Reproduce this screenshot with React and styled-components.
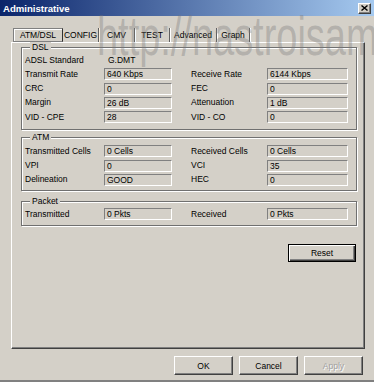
import { Fragment } from 'react';
import styled, { createGlobalStyle, css } from 'styled-components';

const GlobalStyle = createGlobalStyle`
  html, body {
    margin: 0;
    padding: 0;
    background: #d4d0c8;
  }
  body {
    font-family: "Liberation Sans", Arial, sans-serif;
    font-size: 8.5px;
    color: #000;
  }
`;

const Window = styled.div`
  position: relative;
  width: 374px;
  height: 382px;
  box-sizing: border-box;
  overflow: hidden;
  background: #d4d0c8;
  border-bottom: 2px solid #808080;
  display: flex;
  flex-direction: column;
`;

const TitleBar = styled.div`
  height: 16px;
  flex: none;
  display: flex;
  align-items: center;
  justify-content: space-between;
  padding: 0 3px;
  background: linear-gradient(to right, #0a246a, #a6caf0);
  color: #fff;
  font-weight: bold;
  font-size: 9.6px;
`;

const CloseButton = styled.div`
  width: 13px;
  height: 11px;
  box-sizing: border-box;
  background: #d4d0c8;
  border: 1px solid;
  border-color: #fff #404040 #404040 #fff;
  box-shadow: inset -1px -1px 0 #808080;
  display: flex;
  align-items: center;
  justify-content: center;
`;

const Content = styled.div`
  flex: 1;
  display: flex;
  flex-direction: column;
  padding: 12px 9px 0 11px;
`;

const TabStrip = styled.div`
  display: flex;
  height: 14px;
  margin-left: 2px;
`;

const Tab = styled.div`
  width: ${(p) => p.$w}px;
  box-sizing: border-box;
  display: flex;
  align-items: center;
  justify-content: center;
  white-space: nowrap;
  border-right: 1px solid #606060;
  box-shadow: 1px 0 0 #fff;
  ${(p) =>
    p.$active &&
    css`
      border: 1px solid #808080;
      border-right-color: #303030;
      box-shadow: inset 1px 1px 0 #fff;
    `}
`;

const TabPanel = styled.div`
  height: 307px;
  box-sizing: border-box;
  border: 1px solid;
  border-color: #fff #404040 #404040 #fff;
  box-shadow: inset -1px -1px 0 #808080;
  padding: 4px 7px 0 9px;
  display: flex;
  flex-direction: column;
`;

const Group = styled.div`
  margin-top: ${(p) => p.$mt || 0}px;
  border: 1px solid #707070;
  box-shadow: inset 1px 1px 0 #fff, 1px 1px 0 #fff;
  padding: 0 0 ${(p) => p.$pb}px 3px;
`;

const Legend = styled.div`
  width: fit-content;
  height: 11px;
  line-height: 11px;
  margin: -6px 0 0 5px;
  padding: 0 2px;
  background: #d4d0c8;
`;

const Rows = styled.div`
  display: grid;
  grid-template-columns: 79px 68px 19px 76px 81px;
  grid-auto-rows: ${(p) => p.$rh}px;
  padding-top: ${(p) => p.$pt || 0}px;
`;

const Label = styled.div`
  align-self: center;
  white-space: nowrap;
  line-height: 11px;
`;

const Field = styled.div`
  align-self: center;
  height: 12px;
  box-sizing: border-box;
  border: 1px solid;
  border-color: #808080 #fff #fff #808080;
  padding-left: 2px;
  line-height: 10px;
  white-space: nowrap;
`;

const PlainValue = styled.div`
  align-self: center;
  padding-left: 4px;
  line-height: 11px;
`;

const ResetRow = styled.div`
  display: flex;
  justify-content: flex-end;
  margin-top: 18px;
  padding-right: 1px;
`;

const Button = styled.button`
  width: ${(p) => p.$w}px;
  height: ${(p) => p.$h}px;
  box-sizing: border-box;
  padding: 0;
  font: inherit;
  color: #000;
  background: #d4d0c8;
  border: 1px solid;
  border-color: #fff #404040 #404040 #fff;
  box-shadow: inset -1px -1px 0 #808080;
  ${(p) =>
    p.$default &&
    css`
      border: 1px solid #000;
      box-shadow: inset 1px 1px 0 #fff, inset -1px -1px 0 #404040, inset -2px -2px 0 #808080;
    `}
  &:disabled {
    color: #a0a0a0;
    text-shadow: 1px 1px 0 #fff;
  }
`;

const ButtonRow = styled.div`
  display: flex;
  justify-content: flex-end;
  gap: 6px;
  margin-top: 7px;
  padding-right: 2px;
`;

const Watermark = styled.div`
  position: absolute;
  left: 97px;
  top: 9px;
  font-size: 55px;
  line-height: 55px;
  white-space: nowrap;
  color: rgba(120, 120, 120, 0.36);
  transform: scaleX(0.69);
  transform-origin: left top;
  pointer-events: none;
`;

const tabs = [
  { name: 'ATM/DSL', w: 50, active: true },
  { name: 'CONFIG', w: 36 },
  { name: 'CMV', w: 36 },
  { name: 'TEST', w: 35 },
  { name: 'Advanced', w: 47 },
  { name: 'Graph', w: 33 },
];

const groups = [
  {
    title: 'DSL',
    mt: 0,
    pt: 0,
    pb: 5,
    rh: 14.25,
    rows: [
      ['ADSL Standard', { plain: 'G.DMT' }],
      ['Transmit Rate', '640 Kbps', 'Receive Rate', '6144 Kbps'],
      ['CRC', '0', 'FEC', '0'],
      ['Margin', '26 dB', 'Attenuation', '1 dB'],
      ['VID - CPE', '28', 'VID - CO', '0'],
    ],
  },
  {
    title: 'ATM',
    mt: 7,
    pt: 1,
    pb: 3,
    rh: 14.25,
    rows: [
      ['Transmitted Cells', '0 Cells', 'Received Cells', '0 Cells'],
      ['VPI', '0', 'VCI', '35'],
      ['Delineation', 'GOOD', 'HEC', '0'],
    ],
  },
  {
    title: 'Packet',
    mt: 10,
    pt: 0,
    pb: 4,
    rh: 14.25,
    rows: [['Transmitted', '0 Pkts', 'Received', '0 Pkts']],
  },
];

const renderValue = (v) => {
  if (v && typeof v === 'object') return <PlainValue>{v.plain}</PlainValue>;
  return <Field>{v}</Field>;
};

const App = () => {
  return (
    <>
      <GlobalStyle />
      <Window>
        <TitleBar>
          <span>Administrative</span>
          <CloseButton>
            <svg width="7" height="6" viewBox="0 0 7 6">
              <path d="M0.5 0.5 L6.5 5.5 M6.5 0.5 L0.5 5.5" stroke="#000" strokeWidth="1.4" />
            </svg>
          </CloseButton>
        </TitleBar>
        <Content>
          <TabStrip>
            {tabs.map((t) => (
              <Tab key={t.name} $w={t.w} $active={t.active}>
                {t.name}
              </Tab>
            ))}
          </TabStrip>
          <TabPanel>
            {groups.map((g) => (
              <Group key={g.title} $mt={g.mt} $pb={g.pb}>
                <Legend>{g.title}</Legend>
                <Rows $pt={g.pt} $rh={g.rh}>
                  {g.rows.map((r) => (
                    <Fragment key={r[0]}>
                      <Label>{r[0]}</Label>
                      {renderValue(r[1])}
                      <span />
                      {r[2] ? <Label>{r[2]}</Label> : <span />}
                      {r[3] ? renderValue(r[3]) : <span />}
                    </Fragment>
                  ))}
                </Rows>
              </Group>
            ))}
            <ResetRow>
              <Button $w={68} $h={18} $default>
                Reset
              </Button>
            </ResetRow>
          </TabPanel>
          <ButtonRow>
            <Button $w={59} $h={19}>OK</Button>
            <Button $w={59} $h={19}>Cancel</Button>
            <Button $w={59} $h={19} disabled>
              Apply
            </Button>
          </ButtonRow>
        </Content>
        <Watermark>http://nastroisam</Watermark>
      </Window>
    </>
  );
};

export default App;
